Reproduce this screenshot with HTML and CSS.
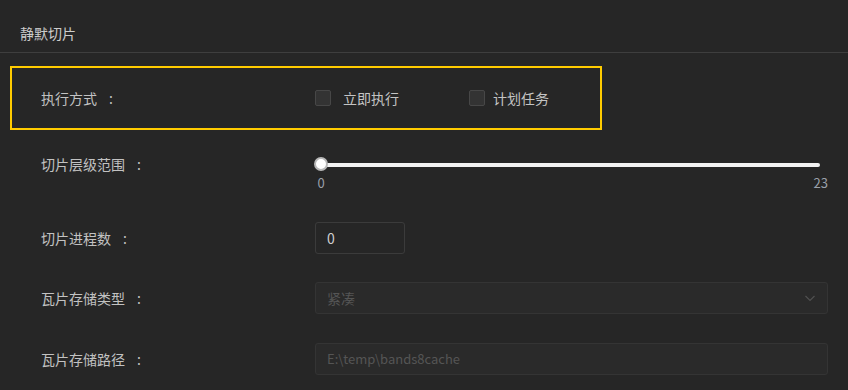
FILE: index.html
```html
<!DOCTYPE html>
<html lang="zh-CN">
<head>
    <meta charset="UTF-8">
    <meta name="viewport" content="width=device-width, initial-scale=1.0">
    <title>静默切片</title>
    <link rel="stylesheet" href="styles.css">
</head>
<body>
    <div class="panel">
        <div class="panel-header">静默切片</div>
        <div class="form">
            <div class="form-row highlight">
                <div class="label">执行方式<span class="colon">:</span></div>
                <div class="control checks">
                    <label class="check"><span class="box"></span>立即执行</label>
                    <label class="check tight"><span class="box"></span>计划任务</label>
                </div>
            </div>
            <div class="form-row slider-row">
                <div class="label">切片层级范围<span class="colon">:</span></div>
                <div class="control slider">
                    <div class="track">
                        <div class="rail"></div>
                        <div class="thumb"></div>
                    </div>
                    <div class="marks">
                        <span class="mark-min">0</span>
                        <span>23</span>
                    </div>
                </div>
            </div>
            <div class="form-row input-row">
                <div class="label">切片进程数<span class="colon">:</span></div>
                <div class="control">
                    <div class="input small">0</div>
                </div>
            </div>
            <div class="form-row input-row">
                <div class="label">瓦片存储类型<span class="colon">:</span></div>
                <div class="control">
                    <div class="input wide disabled">
                        <span>紧凑</span>
                        <svg class="arrow" width="10" height="7" viewBox="0 0 10 7">
                            <path d="M0.5 1 L5 5.5 L9.5 1" fill="none" stroke="#505050" stroke-width="1.2"/>
                        </svg>
                    </div>
                </div>
            </div>
            <div class="form-row input-row">
                <div class="label">瓦片存储路径<span class="colon">:</span></div>
                <div class="control">
                    <div class="input wide disabled path">E:\temp\bands8cache</div>
                </div>
            </div>
        </div>
    </div>
</body>
</html>
```

FILE: styles.css
```css
body {
    margin: 0;
    padding: 0;
    background-color: #262626;
    font-family: "Noto Sans CJK SC", "Noto Sans", sans-serif;
    font-size: 14px;
    color: #c4c4c4;
}
.panel {
    width: 848px;
    height: 390px;
    overflow: hidden;
}
.panel-header {
    height: 28px;
    padding: 24px 0 0 20px;
    line-height: 18px;
    border-bottom: 1px solid #3e3e3e;
    color: #cccccc;
}
.form-row {
    display: flex;
    align-items: center;
    padding-left: 41px;
}
.label {
    width: 274px;
    flex-shrink: 0;
    color: #c2c2c2;
}
.colon {
    margin-left: 12px;
}
.highlight {
    margin: 13px 0 0 10px;
    width: 559px;
    height: 60px;
    padding-left: 29px;
    border: 2px solid #ffcc00;
}
.checks {
    display: flex;
}
.check {
    display: flex;
    align-items: center;
    width: 154px;
    color: #c4c4c4;
}
.box {
    width: 14px;
    height: 14px;
    border: 1px solid #474747;
    background: #333333;
    border-radius: 2px;
    margin-right: 12px;
}
.check.tight .box {
    margin-right: 8px;
}
.slider-row {
    margin-top: 27px;
    align-items: flex-start;
}
.slider-row .label {
    line-height: 14px;
}
.slider {
    width: 513px;
}
.track {
    position: relative;
    display: flex;
    align-items: center;
    height: 14px;
}
.rail {
    flex: 1;
    margin: 1px 8px 0 6px;
    height: 4px;
    border-radius: 2px;
    background: #f2f2f2;
}
.thumb {
    position: absolute;
    left: -1px;
    top: 0;
    width: 10px;
    height: 10px;
    border: 2px solid #b8b8b8;
    border-radius: 50%;
    background: #ffffff;
}
.marks {
    display: flex;
    justify-content: space-between;
    margin-top: 4px;
    font-size: 13px;
    line-height: 16px;
    color: #9aa0aa;
}
.mark-min {
    width: 12px;
    text-align: center;
}
.input-row {
    margin-top: 28px;
}
.slider-row + .input-row {
    margin-top: 31px;
}
.input-row:last-child {
    margin-top: 29px;
}
.input {
    box-sizing: border-box;
    height: 32px;
    line-height: 30px;
    border: 1px solid #3b3b3b;
    border-radius: 3px;
    padding: 0 11px;
    color: #cfcfcf;
}
.input.small {
    width: 90px;
}
.input.wide {
    width: 513px;
}
.disabled {
    display: flex;
    justify-content: space-between;
    align-items: center;
    background: #2a2a2a;
    border-color: #343434;
    color: #555555;
}
.path {
    font-size: 13px;
}
.arrow {
    margin-right: 1px;
}
```
